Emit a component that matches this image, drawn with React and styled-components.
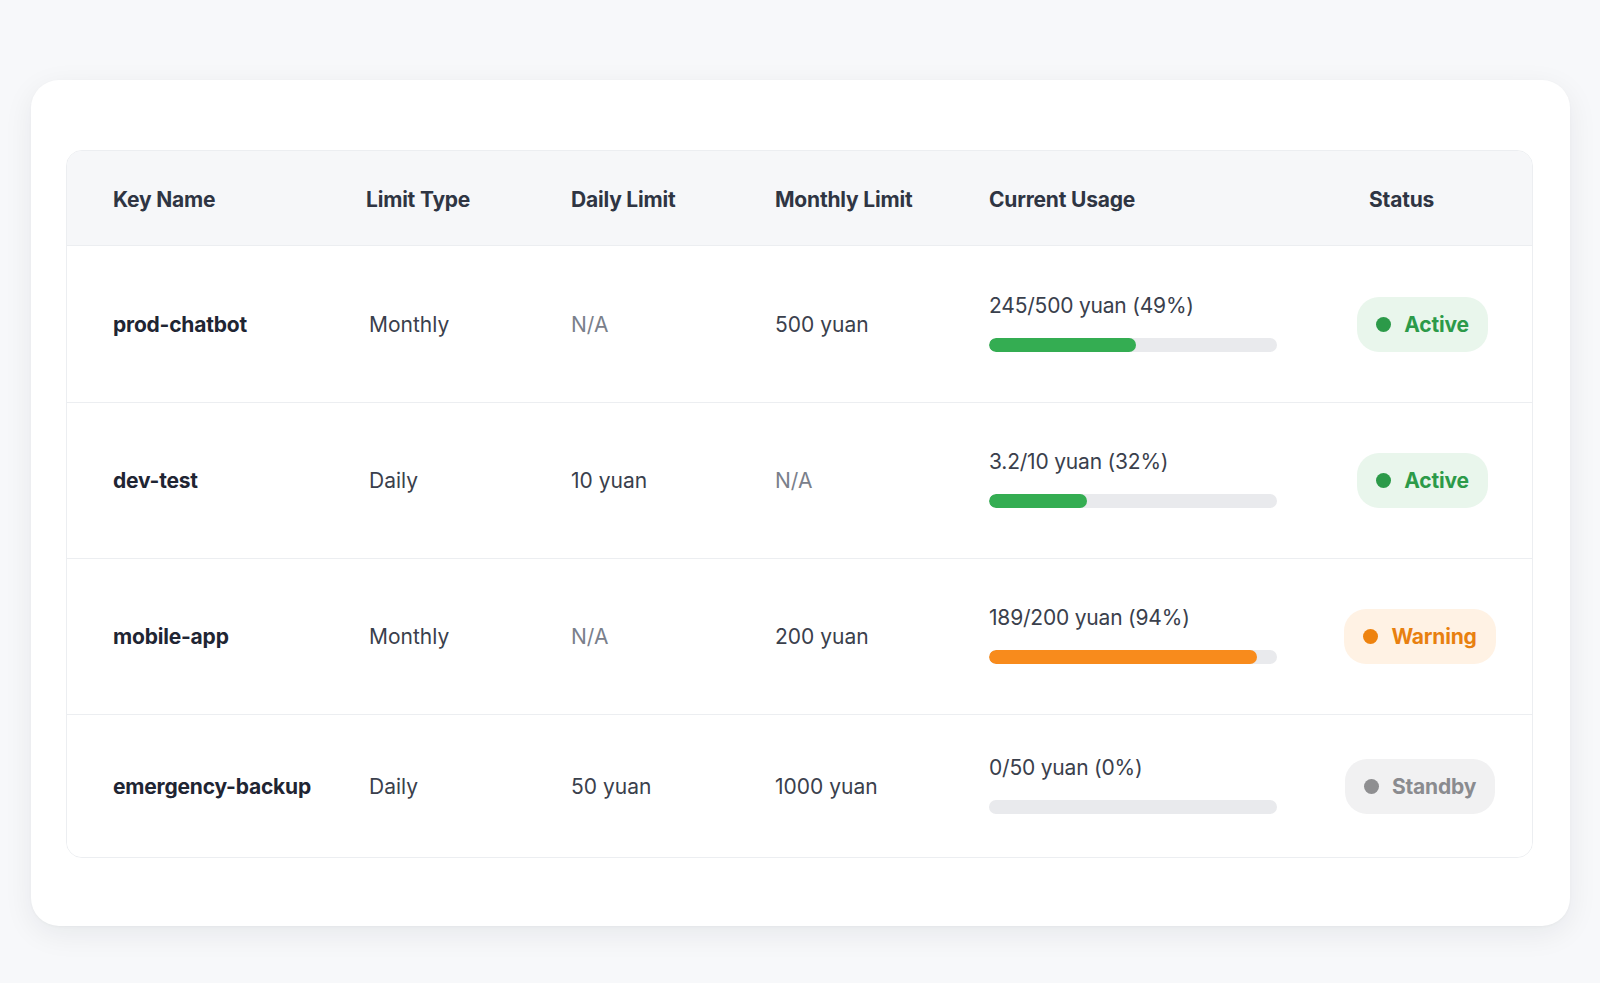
import React from 'react';
import styled, { createGlobalStyle } from 'styled-components';

const GlobalStyle = createGlobalStyle`
  html, body {
    margin: 0;
    padding: 0;
    background: #f7f8fa;
    font-family: Inter, "Noto Sans", sans-serif;
    -webkit-font-smoothing: antialiased;
  }
`;

const Page = styled.div`
  min-height: 983px;
  box-sizing: border-box;
  padding: 80px 30px 0 31px;
`;

const Card = styled.div`
  background: #ffffff;
  border-radius: 28px;
  box-shadow: 0 8px 30px rgba(20, 24, 40, 0.07), 0 1px 3px rgba(20, 24, 40, 0.03);
  padding: 70px 37px 68px 35px;
`;

const Table = styled.div`
  border: 1px solid #eceef1;
  border-radius: 16px;
  overflow: hidden;
`;

const Row = styled.div`
  box-sizing: border-box;
  display: grid;
  grid-template-columns: 253px 205px 204px 214px 356px 150px;
  align-items: center;
  padding: ${(p) => (p.head ? '3px' : '0')} 38px 0 46px;
  height: ${(p) => p.height}px;
  background: ${(p) => (p.head ? '#f6f7f9' : '#ffffff')};
  border-bottom: ${(p) => (p.last ? 'none' : '1px solid #eceef1')};
`;

const HeadCell = styled.div`
  font-size: 21px;
  font-weight: 700;
  color: #2f3543;
  padding-left: ${(p) => p.indent || 0}px;
  letter-spacing: -0.2px;
`;

const KeyCell = styled.div`
  font-size: 21px;
  font-weight: 700;
  color: #1f2533;
  letter-spacing: -0.2px;
`;

const Cell = styled.div`
  font-size: 21px;
  font-weight: 400;
  color: ${(p) => (p.muted ? '#7a808b' : '#3a404c')};
  padding-left: ${(p) => p.indent || 0}px;
`;

const Usage = styled.div`
  display: flex;
  flex-direction: column;
  gap: 20px;
  margin-top: -4px;
`;

const UsageText = styled.div`
  font-size: 21px;
  color: #3a404c;
  letter-spacing: -0.2px;
`;

const Track = styled.div`
  width: 288px;
  height: 14px;
  border-radius: 7px;
  background: #e9eaed;
  overflow: hidden;
`;

const Fill = styled.div`
  height: 100%;
  border-radius: 7px;
  background: ${(p) => p.color};
`;

const badgeTones = {
  active: { bg: '#e9f6ec', fg: '#2c9a49', dot: '#2c9a49' },
  warning: { bg: '#fff2e4', fg: '#e8800f', dot: '#ee830f' },
  standby: { bg: '#f1f1f2', fg: '#8a8b8f', dot: '#8f8f91' },
};

const Badge = styled.div`
  justify-self: center;
  display: flex;
  align-items: center;
  gap: 13px;
  height: 55px;
  padding: 0 19px;
  margin-left: ${(p) => (p.tone === 'active' ? 5 : 0)}px;
  border-radius: 22px;
  background: ${(p) => badgeTones[p.tone].bg};
  color: ${(p) => badgeTones[p.tone].fg};
  font-size: 21px;
  font-weight: 700;
  letter-spacing: -0.2px;
`;

const Dot = styled.span`
  width: 15px;
  height: 15px;
  border-radius: 50%;
  background: ${(p) => badgeTones[p.tone].dot};
`;

const rows = [
  { key: 'prod-chatbot', type: 'Monthly', daily: 'N/A', monthly: '500 yuan', used: '245/500 yuan (49%)', pct: 51, color: '#34ad52', status: 'active', label: 'Active', h: 157 },
  { key: 'dev-test', type: 'Daily', daily: '10 yuan', monthly: 'N/A', used: '3.2/10 yuan (32%)', pct: 34, color: '#34ad52', status: 'active', label: 'Active', h: 156 },
  { key: 'mobile-app', type: 'Monthly', daily: 'N/A', monthly: '200 yuan', used: '189/200 yuan (94%)', pct: 93, color: '#f88b1c', status: 'warning', label: 'Warning', h: 156 },
  { key: 'emergency-backup', type: 'Daily', daily: '50 yuan', monthly: '1000 yuan', used: '0/50 yuan (0%)', pct: 0, color: '#34ad52', status: 'standby', label: 'Standby', h: 142 },
];

const App = () => {
  return (
    <Page>
      <GlobalStyle />
      <Card>
        <Table>
          <Row head height={95}>
            <HeadCell>Key Name</HeadCell>
            <HeadCell>Limit Type</HeadCell>
            <HeadCell>Daily Limit</HeadCell>
            <HeadCell>Monthly Limit</HeadCell>
            <HeadCell>Current Usage</HeadCell>
            <HeadCell indent={24}>Status</HeadCell>
          </Row>
          {rows.map((r, i) => (
            <Row key={r.key} height={r.h} last={i === rows.length - 1}>
              <KeyCell>{r.key}</KeyCell>
              <Cell indent={3}>{r.type}</Cell>
              <Cell muted={r.daily === 'N/A'}>{r.daily}</Cell>
              <Cell muted={r.monthly === 'N/A'}>{r.monthly}</Cell>
              <Usage>
                <UsageText>{r.used}</UsageText>
                <Track>
                  <Fill color={r.color} style={{ width: `${r.pct}%` }} />
                </Track>
              </Usage>
              <Badge tone={r.status}>
                <Dot tone={r.status} />
                {r.label}
              </Badge>
            </Row>
          ))}
        </Table>
      </Card>
    </Page>
  );
};

export default App;
